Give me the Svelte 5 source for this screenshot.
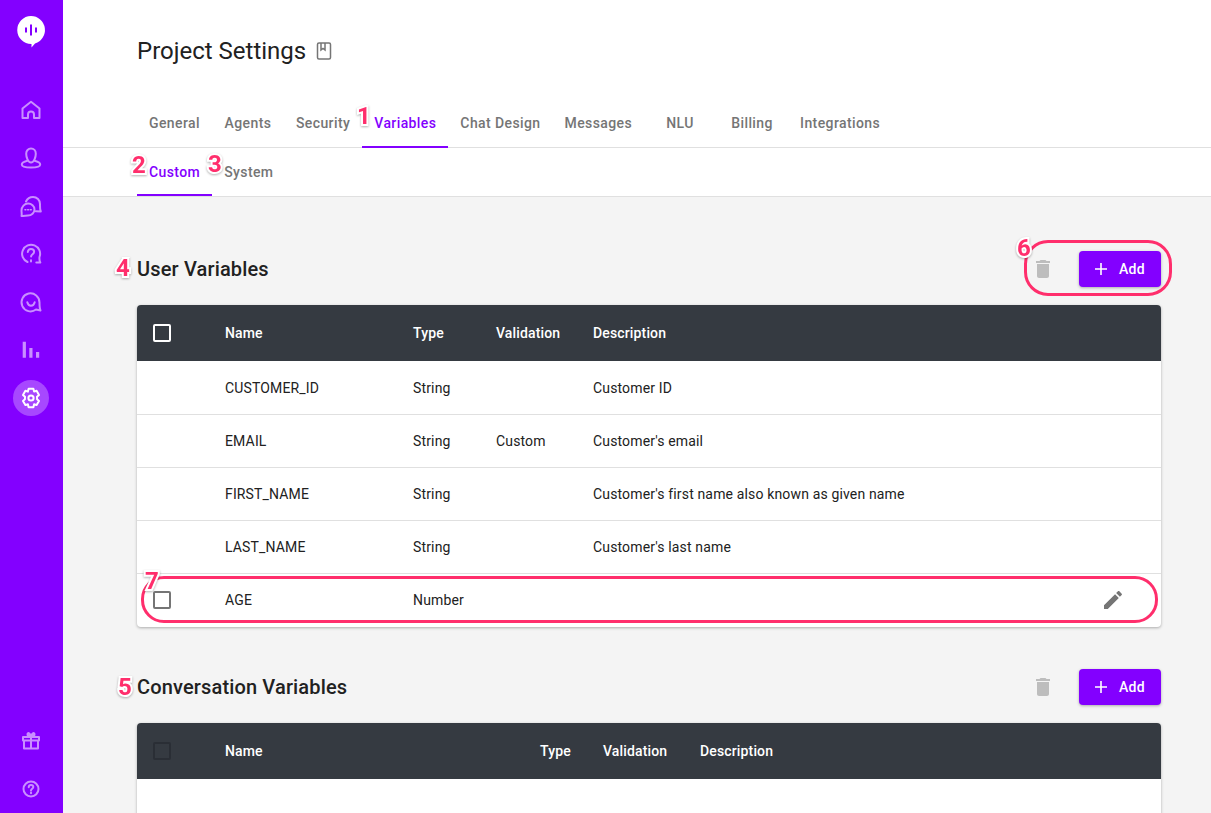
<script>
  const tabs = [
    { label: 'General' }, { label: 'Agents' }, { label: 'Security' },
    { label: 'Variables', active: true }, { label: 'Chat Design' }, { label: 'Messages' },
    { label: 'NLU' }, { label: 'Billing' }, { label: 'Integrations' }
  ];
  const rows = [
    { name: 'CUSTOMER_ID', type: 'String', validation: '', description: 'Customer ID' },
    { name: 'EMAIL', type: 'String', validation: 'Custom', description: "Customer's email" },
    { name: 'FIRST_NAME', type: 'String', validation: '', description: "Customer's first name also known as given name" },
    { name: 'LAST_NAME', type: 'String', validation: '', description: "Customer's last name" },
    { name: 'AGE', type: 'Number', validation: '', description: '', hover: true }
  ];
  const trash = 'M6 19c0 1.1.9 2 2 2h8c1.1 0 2-.9 2-2V7H6v12zM19 4h-3.5l-1-1h-5l-1 1H5v2h14V4z';
  const pencil = 'M3 17.25V21h3.75L17.81 9.94l-3.75-3.75L3 17.25zM20.71 7.04c.39-.39.39-1.02 0-1.41l-2.34-2.34c-.39-.39-1.02-.39-1.41 0l-1.83 1.83 3.75 3.75 1.83-1.83z';
</script>

{#snippet actions()}
  <div class="actions">
    <svg class="trash" viewBox="0 0 24 24" width="24" height="24"><path d={trash} /></svg>
    <button class="add">
      <svg viewBox="0 0 14 14" width="14" height="14"><path d="M1 7h12M7 1v12" /></svg>
      <span>Add</span>
    </button>
  </div>
{/snippet}

<div class="page">
  <aside class="rail">
    <svg class="logo" viewBox="0 0 32 34" width="32" height="34">
      <path class="logo-bg" d="M16 2a14 14 0 0 1 4 27.4L16.500 33.500V30A14 14 0 0 1 16 2z" />
      <path class="logo-bars" d="M11 13.500v5M16 10.500v11M21 13.500v5" />
    </svg>
    <nav class="rail-nav">
      <div class="rail-item">
        <svg viewBox="0 0 24 24"><path d="M3.500 20V10.500L12 3.800l8.500 6.700V20h-5.500v-3.500a3 3 0 0 0-6 0V20z" /></svg>
      </div>
      <div class="rail-item">
        <svg viewBox="0 0 24 24"><path d="M12 2.500c2.800 0 4.800 2.300 4.800 5.200 0 3.300-1.800 8.800-4.800 8.800s-4.800-5.500-4.800-8.800c0-2.900 2-5.200 4.800-5.200z" /><path d="M8.300 14.700C5 15.600 2.800 17 2.800 18.500c0 1.900 4 3 9.200 3s9.200-1.100 9.200-3c0-1.500-2.200-2.900-5.500-3.800" /></svg>
      </div>
      <div class="rail-item">
        <svg viewBox="0 0 24 24"><path d="M7 7.500C8.200 5 11 3 14 3c4 0 7 3.200 7 7 0 2.500-.3 5 .8 7.500l-5-.2" /><path d="M9 9.500c3.500 0 6.500 2.700 6.500 6s-3 6-6.500 6c-1.500 0-4.500.5-6.500.5.500-1.500 0-3.500 0-5.500 0-3.800 3-7 6.500-7z" /><path class="dots" d="M6 15.800h.8M8.700 15.800h.8M11.400 15.800h.8" /></svg>
      </div>
      <div class="rail-item">
        <svg viewBox="0 0 24 24"><path d="M8.500 20A9 9 0 1 1 20.500 15c-.2 2 0 4 .8 5.500h-4" /><path d="M8.800 10c.2-1.700 1.500-2.900 3.200-2.900 1.800 0 3.100 1.200 3.100 2.700 0 2.400-3 2.400-3 4.800" /><path d="M12 18.200v1.400" /></svg>
      </div>
      <div class="rail-item">
        <svg viewBox="0 0 24 24"><path d="M17 19.500A9 9 0 1 1 20.500 12.500c0 3 0 5.800 1 8z" /><path d="M8.300 12.300c.6 2.300 2 3.500 3.700 3.500s3.100-1.200 3.700-3.500" /></svg>
      </div>
      <div class="rail-item">
        <svg viewBox="0 0 24 24"><path class="solid" d="M3.700 3.800h3.200v16H3.700zM10.300 10h3.200v9.800h-3.200zM17 14h3.200v5.800H17z" /></svg>
      </div>
      <div class="rail-item current">
        <span class="current-bg">
          <svg viewBox="0 0 24 24"><path d="M9.600 2.800h4.800l.7 2.800 2.500-.8 2.400 4.200-2 1.800.1 2.400 1.900 1.700-2.400 4.200-2.500-.8-.7 2.900H9.600l-.7-2.900-2.500.8L4 14.900l1.900-1.700.1-2.400-2-1.800 2.400-4.200 2.500.8z" /><circle cx="12" cy="12" r="2.600" /></svg>
        </span>
      </div>
    </nav>
    <div class="rail-bottom">
      <div class="rail-item">
        <svg viewBox="0 0 24 24"><path d="M4 8h16v3.500H4zM5 11.500h14V19.500H5zM12 8v11.500M12 8C10.500 7.800 8.500 7 8.500 5.300 8.500 3.500 11 3.300 12 8zM12 8c1.500-.2 3.500-1 3.500-2.700C15.500 3.500 13 3.300 12 8z" /></svg>
      </div>
      <div class="rail-item">
        <svg viewBox="0 0 24 24"><circle cx="12" cy="12" r="7.500" /><path d="M9.700 10.200c.1-1.300 1.100-2.100 2.300-2.100 1.400 0 2.300.8 2.300 1.900 0 1.700-2.300 1.800-2.300 3.500" /><path d="M12 15.500v.8" /></svg>
      </div>
    </div>
  </aside>

  <main class="main">
    <header class="head">
      <div class="title-row">
        <h1>Project Settings</h1>
        <svg class="book" viewBox="0 0 16 18" width="16" height="18"><rect x="1.500" y="1" width="13" height="16" rx="1.500" /><path d="M5 1v7l2-1.500L9 8V1" /></svg>
      </div>
      <div class="tabs">
        {#each tabs as t}
          <div class="tab" class:on={t.active}>{t.label}</div>
        {/each}
      </div>
    </header>
    <div class="subtabs">
      <div class="tab sub on">Custom</div>
      <div class="tab sub">System</div>
    </div>

    <section class="content">
      <div class="section-head first">
        <h2>User Variables</h2>
        {@render actions()}
      </div>
      <div class="table t1">
        <div class="row th">
          <span class="box light"></span><span>Name</span><span>Type</span><span>Validation</span><span>Description</span>
        </div>
        {#each rows as r}
          <div class="row td">
            <span class="cell-check">{#if r.hover}<span class="box gray"></span>{/if}</span>
            <span>{r.name}</span><span>{r.type}</span><span>{r.validation}</span><span>{r.description}</span>
            {#if r.hover}
              <svg class="pencil" viewBox="0 0 24 24" width="24" height="24"><path d={pencil} /></svg>
            {/if}
          </div>
        {/each}
      </div>

      <div class="section-head second">
        <h2>Conversation Variables</h2>
        {@render actions()}
      </div>
      <div class="table t2">
        <div class="row th">
          <span class="box dim"></span><span>Name</span><span>Type</span><span>Validation</span><span>Description</span>
        </div>
        <div class="row td"></div>
      </div>
    </section>
  </main>

  <div class="ring r6"></div>
  <div class="ring r7"></div>
  <span class="num n1">1</span>
  <span class="num n2">2</span>
  <span class="num n3">3</span>
  <span class="num n4">4</span>
  <span class="num n5">5</span>
  <span class="num n6">6</span>
  <span class="num n7">7</span>
</div>

<style>
  :global(body) { margin: 0; background: #f4f4f4; }
  * { box-sizing: border-box; }
  .page {
    position: relative; display: flex; height: 813px; overflow: hidden;
    font-family: Roboto, "Liberation Sans", sans-serif; color: #212121;
  }
  .rail {
    width: 63px; flex: none; background: #8300ff; display: flex; flex-direction: column; align-items: center;
  }
  .logo { margin-top: 14px; flex: none; margin-left: -1px; }
  .logo-bg { fill: #fff; }
  .logo-bars { stroke: #8300ff; stroke-width: 2; fill: none; stroke-linecap: butt; }
  .rail-nav { margin-top: 38px; display: flex; flex-direction: column; }
  .rail-bottom { margin-top: auto; display: flex; flex-direction: column; }
  .rail-item { width: 48px; height: 48px; display: flex; align-items: center; justify-content: center; margin-left: -1px; }
  .rail-item svg { width: 24px; height: 24px; fill: none; stroke: #c98fff; stroke-width: 2; stroke-linejoin: round; stroke-linecap: round; }
  .rail-item svg .solid { fill: #c98fff; stroke: none; }
  .rail-item svg .dots { stroke-width: 1.6; }
  .current-bg { width: 36px; height: 36px; border-radius: 50%; background: #a748ff; display: flex; align-items: center; justify-content: center; }
  .rail-item.current svg { stroke: #fff; stroke-width: 2; }

  .main { flex: 1; min-width: 0; display: flex; flex-direction: column; }
  .head { height: 148px; flex: none; background: #fff; border-bottom: 1px solid #e0e0e0; padding-left: 74px; display: flex; flex-direction: column; }
  .title-row { display: flex; align-items: center; height: 28px; margin-top: 37px; }
  h1 { margin: 0; font-size: 24px; font-weight: 400; line-height: 28px; }
  .book { margin-left: 10px; fill: none; stroke: #757575; stroke-width: 1.5; }
  .tabs { display: flex; margin-top: auto; }
  .tab {
    min-width: 72px; padding: 0 12px; height: 48px; display: flex; align-items: center; justify-content: center;
    font-size: 14px; font-weight: 500; letter-spacing: 0.4px; color: #757575; margin-bottom: -1px;
    border-bottom: 2px solid transparent;
  }
  .tab.on { color: #8300ff; border-bottom-color: #8300ff; }
  .subtabs { height: 49px; flex: none; background: #fff; border-bottom: 1px solid #e0e0e0; padding-left: 74px; display: flex; }
  .tab.sub { margin-bottom: 0; height: 48px; padding-top: 2px; }

  .content { flex: 1; padding: 0 50px 0 74px; background: #f4f4f4; }
  .section-head { display: flex; align-items: center; justify-content: space-between; height: 36px; }
  .section-head.first { margin-top: 54px; }
  .section-head.second { margin-top: 42px; }
  h2 { margin: 0; font-size: 20px; font-weight: 500; line-height: 24px; letter-spacing: 0.15px; }
  .actions { display: flex; align-items: center; }
  .trash { fill: #bdbdbd; margin-right: 24px; }
  .add {
    width: 82px; height: 36px; border: 0; border-radius: 4px; background: #8300ff; color: #fff;
    font: 500 14px Roboto, "Liberation Sans", sans-serif; letter-spacing: 0.25px;
    display: flex; align-items: center; padding: 0 0 0 15px; gap: 11px;
    box-shadow: 0 1px 3px rgba(0,0,0,.3);
  }
  .add svg { fill: none; stroke: #fff; stroke-width: 1.6; }

  .table { margin-top: 18px; background: #fff; border-radius: 4px; box-shadow: 0 1px 3px rgba(0,0,0,.3); overflow: hidden; }
  .row { display: grid; align-items: center; position: relative; padding-left: 16px; font-size: 14px; letter-spacing: 0.15px; }
  .t1 .row { grid-template-columns: 72px 188px 83px 97px 1fr; }
  .t2 .row { grid-template-columns: 72px 315px 63px 97px 1fr; }
  .th { height: 56px; background: #353a41; color: #fff; font-weight: 500; }
  .td { height: 53px; border-bottom: 1px solid #e0e0e0; color: #212121; }
  .th + .td { height: 54px; }
  .td:last-child { border-bottom-color: transparent; }
  .t2 .td { height: 60px; }
  .box { display: block; width: 18px; height: 18px; border: 2px solid; border-radius: 2px; }
  .box.light { border-color: #fff; }
  .box.gray { border-color: #757575; }
  .box.dim { border-color: #2a2e35; }
  .pencil { position: absolute; right: 36px; top: 14px; fill: #757575; }

  .ring { position: absolute; border: 3px solid #ff2e6c; pointer-events: none; }
  .r6 { left: 1024px; top: 240px; width: 148px; height: 56px; border-radius: 24px; }
  .r7 { left: 141px; top: 576px; width: 1017px; height: 47px; border-radius: 23px; }
  .num {
    position: absolute; font: 700 24px/24px Roboto, "Liberation Sans", sans-serif; color: #ff2e6c;
    -webkit-text-stroke: 4px #fff; paint-order: stroke fill;
    filter: drop-shadow(0 1px 1px rgba(0,0,0,.3));
  }
  .n1 { left: 357px; top: 104px; }
  .n2 { left: 132px; top: 153px; }
  .n3 { left: 208px; top: 152px; }
  .n4 { left: 116px; top: 256px; }
  .n5 { left: 118px; top: 675px; }
  .n6 { left: 1017px; top: 236px; }
  .n7 { left: 145px; top: 569px; }
</style>
